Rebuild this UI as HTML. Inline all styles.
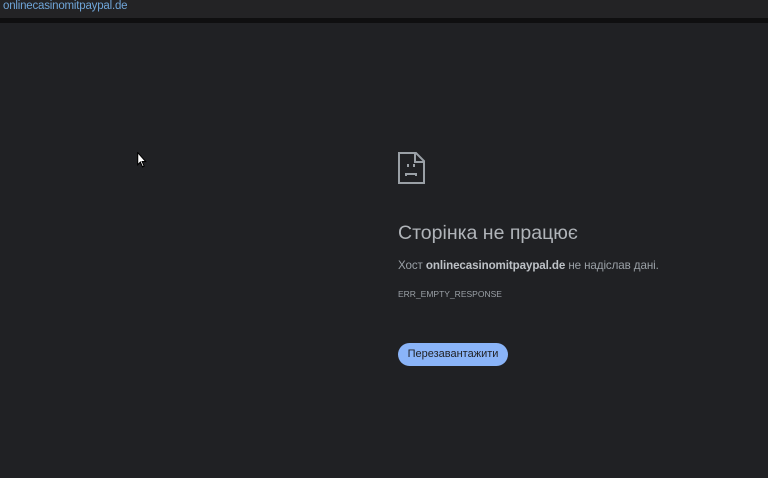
<!DOCTYPE html>
<html><head><meta charset="utf-8"><style>
html,body{margin:0;padding:0;width:768px;height:478px;overflow:hidden;background:#202124;font-family:"Liberation Sans",sans-serif;}
.top{position:absolute;left:0;top:0;width:768px;height:18px;background:#232325;}
.top span{position:absolute;left:3px;top:0px;font-size:11.5px;color:#6fa5d8;letter-spacing:-0.2px;}
.strip{position:absolute;left:0;top:18px;width:768px;height:5px;background:#0f0f10;}
.t{position:absolute;left:398px;color:#bdc1c6;white-space:nowrap;}
.btn{position:absolute;left:398px;top:343px;width:110px;height:23px;border-radius:12px;background:#8ab4f8;color:#202124;font-size:11px;line-height:23px;text-align:center;}
</style></head><body>
<div class="top"><span>onlinecasinomitpaypal.de</span></div>
<div class="strip"></div>
<svg style="position:absolute;left:137px;top:152px" width="11" height="17" viewBox="0 0 10 16"><path d="M0.5 0.5 L0.5 12 L3 9.5 L5 14 L6.5 13.3 L4.7 9 L8 9 Z" fill="#fff" stroke="#000" stroke-width="1"/></svg>
<svg style="position:absolute;left:397px;top:151px" width="30" height="34" viewBox="0 0 30 34"><path d="M2 2 H19 L27 10 V32 H2 Z" fill="none" stroke="#9aa0a6" stroke-width="2"/><path d="M18 2 V11 H27" fill="none" stroke="#9aa0a6" stroke-width="2"/><rect x="10" y="13" width="2" height="3" fill="#9aa0a6"/><rect x="16" y="13" width="2" height="3" fill="#9aa0a6"/><path d="M9 25 V23 H19 V25" fill="none" stroke="#9aa0a6" stroke-width="2"/></svg>
<div class="t" style="top:222px;font-size:19.5px;color:#b0b4b9">Сторінка не працює</div>
<div class="t" style="top:259px;font-size:11.6px;color:#9aa0a6;letter-spacing:-0.1px">Хост <b style="color:#bdc1c6">onlinecasinomitpaypal.de</b> не надіслав дані.</div>
<div class="t" style="top:289px;font-size:8.5px;color:#9aa0a6">ERR_EMPTY_RESPONSE</div>
<div class="btn">Перезавантажити</div>
</body></html>
